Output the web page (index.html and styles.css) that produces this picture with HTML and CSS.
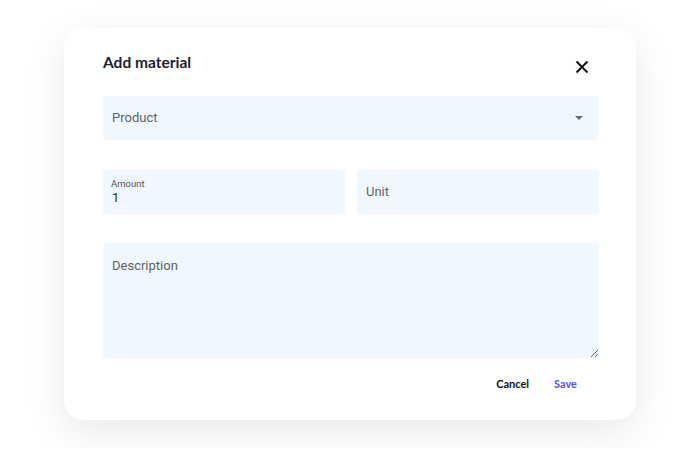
FILE: index.html
```html
<!DOCTYPE html>
<html lang="en">
  <head>
    <meta charset="UTF-8" />
    <title>Add material</title>
    <link rel="stylesheet" href="styles.css">
  </head>
  <body>
    <div class="dialog">
      <div class="dialog-header">
        <h2 class="dialog-title">Add material</h2>
        <button class="close-btn" aria-label="Close">
          <svg width="14" height="14" viewBox="0 0 14 14">
            <path d="M1.5 1.5 L12.5 12.5 M12.5 1.5 L1.5 12.5" stroke="#111" stroke-width="2" fill="none" />
          </svg>
        </button>
      </div>

      <div class="field select-field">
        <span class="placeholder">Product</span>
        <span class="arrow"></span>
      </div>

      <div class="field-row">
        <div class="field filled-field">
          <label class="field-label">Amount</label>
          <input class="field-input" type="text" value="1" />
        </div>
        <div class="field">
          <input class="field-input" type="text" placeholder="Unit" />
        </div>
      </div>

      <textarea class="field textarea-field" placeholder="Description"></textarea>

      <div class="dialog-actions">
        <button class="action-btn">Cancel</button>
        <button class="action-btn primary">Save</button>
      </div>
    </div>
  </body>
</html>
```

FILE: styles.css
```css
* {
  box-sizing: border-box;
  margin: 0;
  padding: 0;
}

body {
  background-color: #fff;
  font-family: Roboto, "Noto Sans", sans-serif;
  padding: 28px 64px;
}

.dialog {
  width: 572px;
  height: 392px;
  background-color: #fff;
  border-radius: 20px;
  box-shadow: 0 12px 40px rgba(0, 0, 0, 0.09);
  padding: 0 37px 0 39px;
}

.dialog-header {
  display: flex;
  justify-content: space-between;
  align-items: flex-start;
  height: 68px;
}

.dialog-title {
  margin-top: 24px;
  font-family: Lato, sans-serif;
  font-size: 15.5px;
  line-height: 20px;
  font-weight: bold;
  color: #1e1d33;
}

.close-btn {
  margin-top: 32px;
  margin-right: 10px;
  width: 14px;
  height: 14px;
  border: none;
  background: none;
  display: flex;
  cursor: pointer;
}

.field {
  display: flex;
  align-items: center;
  height: 44px;
  padding: 0 9px;
  background-color: #f0f7fe;
  border: none;
  border-radius: 4px;
  font-size: 13px;
  color: #5f6368;
}

.select-field {
  justify-content: space-between;
}

.select-field .placeholder {
  margin-top: -2px;
}

.arrow {
  width: 0;
  height: 0;
  margin-right: 7px;
  border-left: 4px solid transparent;
  border-right: 4px solid transparent;
  border-top: 4px solid #6b6b6b;
}

.field-row {
  display: flex;
  gap: 12px;
  margin-top: 30px;
}

.field-row .field {
  flex: 1;
}

.filled-field {
  flex-direction: column;
  align-items: flex-start;
  justify-content: center;
}

.field-label {
  font-size: 9.5px;
  color: #555;
  line-height: 12px;
  margin-left: -1px;
}

.field-input {
  width: 100%;
  border: none;
  outline: none;
  background: transparent;
  font-family: Roboto, "Noto Sans", sans-serif;
  font-size: 13px;
  color: #2b2b2b;
  line-height: 16px;
}

.field-input::placeholder,
.textarea-field::placeholder {
  color: #5f6368;
  opacity: 1;
}

.textarea-field {
  display: block;
  width: 100%;
  height: 115px;
  margin-top: 29px;
  padding: 15px 9px;
  font-family: Roboto, "Noto Sans", sans-serif;
  outline: none;
  resize: vertical;
}

.dialog-actions {
  display: flex;
  justify-content: flex-end;
  gap: 25px;
  margin-top: 19px;
  padding-right: 22px;
}

.action-btn {
  border: none;
  background: none;
  font-family: Lato, sans-serif;
  font-size: 11px;
  font-weight: bold;
  color: #111;
  cursor: pointer;
}

.action-btn.primary {
  color: #4f4ff5;
}
```
